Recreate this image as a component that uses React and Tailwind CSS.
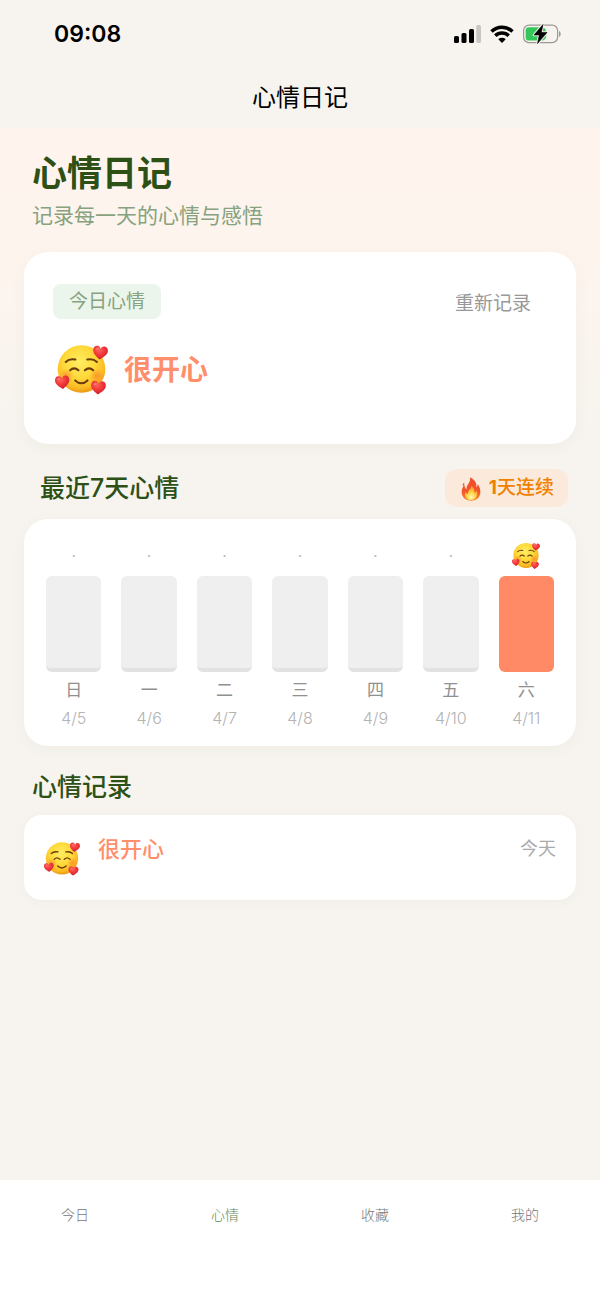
const HEART = 'M0 20 C-9 13 -22 5 -22 -7 C-22 -15 -17 -20 -11 -20 C-5 -20 -2 -17 0 -12 C2 -17 5 -20 11 -20 C17 -20 22 -15 22 -7 C22 5 9 13 0 20 Z';

const HEARTS = ['translate(151 52) rotate(6)', 'translate(38 140) rotate(-6) scale(0.97)', 'translate(145 156) rotate(4)'];

function LoveFace({ id, className }) {
  return (
    <svg viewBox="16 28 158 150" className={className} role="img" aria-label="很开心">
      <defs>
        <radialGradient id={`${id}-face`} cx="0.46" cy="0.36" r="0.66">
          <stop offset="0" stopColor="#ffee62" />
          <stop offset="0.5" stopColor="#ffd93a" />
          <stop offset="0.82" stopColor="#fbb922" />
          <stop offset="1" stopColor="#ea9010" />
        </radialGradient>
        <radialGradient id={`${id}-cheek`}>
          <stop offset="0" stopColor="#f8792b" stopOpacity="0.6" />
          <stop offset="1" stopColor="#f8792b" stopOpacity="0" />
        </radialGradient>
        <radialGradient id={`${id}-heart`} cx="0.4" cy="0.3" r="0.75">
          <stop offset="0" stopColor="#ff6259" />
          <stop offset="0.55" stopColor="#ee3438" />
          <stop offset="1" stopColor="#c8182a" />
        </radialGradient>
      </defs>
      <circle cx="95" cy="100" r="71" fill={`url(#${id}-face)`} />
      <circle cx="50" cy="120" r="22" fill={`url(#${id}-cheek)`} />
      <circle cx="140" cy="120" r="22" fill={`url(#${id}-cheek)`} />
      <g fill="none" stroke="#6b3d0c" strokeWidth="6" strokeLinecap="round">
        <path d="M48 79 Q59 68 77 72" />
        <path d="M112 72 Q130 68 141 79" />
        <path d="M61 104 Q73 92 86 104" />
        <path d="M105 104 Q118 92 130 104" />
        <path d="M76 134 Q95 151 113 134" />
      </g>
      {HEARTS.map((t) => (
        <g key={t} transform={t}>
          <path d={HEART} fill={`url(#${id}-heart)`} />
          <ellipse cx="-10" cy="-11" rx="5" ry="3" fill="#ff9a90" opacity="0.6" transform="rotate(-25 -10 -11)" />
        </g>
      ))}
    </svg>
  );
}

function Flame({ className }) {
  return (
    <svg viewBox="0 0 60 72" className={className} aria-hidden="true">
      <defs>
        <linearGradient id="flame-outer" x1="0" y1="0" x2="0" y2="1">
          <stop offset="0" stopColor="#ee4a2b" />
          <stop offset="0.6" stopColor="#f4552a" />
          <stop offset="1" stopColor="#f98a2c" />
        </linearGradient>
        <radialGradient id="flame-inner" cx="0.5" cy="0.8" r="0.75">
          <stop offset="0" stopColor="#fff9b8" />
          <stop offset="0.45" stopColor="#ffd447" />
          <stop offset="1" stopColor="#fb8a2c" />
        </radialGradient>
      </defs>
      <path d="M27 1 C42 9 48 19 46 31 C49 29 50 25 50 21 C56 29 59 38 58 47 C57 62 45 71 30 71 C13 71 2 60 2 45 C2 36 6 29 10 24 C11 31 13 35 17 37 C14 24 31 17 27 1 Z" fill="url(#flame-outer)" />
      <path d="M31 26 C42 34 40 41 41 48 C45 45 46 42 46 38 C54 53 45 69 30 69 C16 69 8 57 14 44 C16 49 18 50 21 51 C18 41 31 37 31 26 Z" fill="url(#flame-inner)" />
      <path d="M9 17 C5 20 4 24 6 27 C10 25 11 21 9 17 Z" fill="#f0552d" />
    </svg>
  );
}

function StatusIcons() {
  return (
    <div className="flex items-center gap-[9px]">
      <svg viewBox="0 0 27 18" className="h-[18px] w-[27px]" aria-label="信号">
        <rect x="0" y="11" width="5" height="7" rx="1.6" />
        <rect x="7.5" y="8" width="5" height="10" rx="1.6" />
        <rect x="15" y="4" width="5" height="14" rx="1.6" />
        <rect x="22.3" y="0" width="4.7" height="18" rx="1.6" fill="#c9c6c3" />
      </svg>
      <svg viewBox="0 0 24 18" className="h-[18px] w-6" aria-label="无线网络">
        <g fill="none" stroke="#000" strokeWidth="3.5">
          <path d="M1.5 6.6 A14.8 14.8 0 0 1 22.5 6.6" />
          <path d="M5.3 10.8 A9.4 9.4 0 0 1 18.7 10.8" />
        </g>
        <path d="M12 18 L8.3 14.3 A5.4 5.4 0 0 1 15.7 14.3 Z" />
      </svg>
      <svg viewBox="0 0 38 20" className="h-5 w-[38px]" aria-label="正在充电">
        <rect x="0.6" y="1.2" width="34" height="17.4" rx="5.4" fill="none" stroke="#9b9996" strokeWidth="1.2" />
        <path d="M36 7 C38.2 7.8 38.2 12 36 12.8 Z" fill="#9b9996" />
        <path d="M6 3.2 H20 Q23.5 5 23.5 10 Q23.5 15 20 16.6 H6 Q2.6 16.6 2.6 13.2 V6.6 Q2.6 3.2 6 3.2 Z" fill="#34c759" />
        <path d="M20 0.5 L11 11 H16.3 L14.5 19.5 L24 8.5 H18.3 Z" stroke="#f7f4ef" strokeWidth="2.6" strokeLinejoin="round" />
        <path d="M20 0.5 L11 11 H16.3 L14.5 19.5 L24 8.5 H18.3 Z" stroke="#000" strokeWidth="0.6" strokeLinejoin="round" />
      </svg>
    </div>
  );
}

const DAYS = [
  { name: '日', date: '4/5' },
  { name: '一', date: '4/6' },
  { name: '二', date: '4/7' },
  { name: '三', date: '4/8' },
  { name: '四', date: '4/9' },
  { name: '五', date: '4/10' },
  { name: '六', date: '4/11', happy: true },
];

const TABS = ['今日', '心情', '收藏', '我的'];

function Day({ name, date, happy }) {
  return (
    <li className="flex min-w-0 flex-1 flex-col items-center px-[10px]">
      <span className="flex h-9 items-center text-base text-[#bbbbbb]">
        {happy ? <LoveFace id="day" className="h-7 w-7" /> : '·'}
      </span>
      <span
        className={
          happy
            ? 'mt-[2px] h-24 w-full rounded-md bg-[#ff8a65]'
            : 'mt-[2px] h-24 w-full rounded-md border-b-4 border-[#e2e2e2] bg-[#efefef]'
        }
      />
      <span className="mt-1 text-[17px] leading-7 text-[#909090]">{name}</span>
      <span className="text-base leading-7 font-light text-[#b3b3b3]">{date}</span>
    </li>
  );
}

export default function App() {
  return (
    <div className="flex min-h-screen flex-col bg-[#f7f4ef] font-['Inter','Noto_Sans_CJK_SC',sans-serif] text-black">
      <header>
        <div className="flex h-[68px] items-center justify-between pl-[54px] pr-[39px]">
          <time className="text-[23px] font-semibold">09:08</time>
          <StatusIcons />
        </div>
        <p className="flex h-[60px] items-center justify-center text-2xl">心情日记</p>
      </header>

      <main className="flex-1 bg-[linear-gradient(#fff4ed,#fcf4ee_180px,#f7f4ef_300px)] px-6 pt-5 pb-8">
        <div className="px-2">
          <h1 className="text-[35px] leading-[50px] font-bold text-[#2d5016]">心情日记</h1>
          <p className="text-[21px] leading-9 text-[#86a27f]">记录每一天的心情与感悟</p>
        </div>

        <section className="mt-[18px] h-48 rounded-3xl bg-white px-[29px] pt-8 shadow-[0_4px_16px_rgba(45,80,22,0.04)]">
          <div className="flex items-start justify-between">
            <h2 className="rounded-lg bg-[#ebf5eb] px-4 pt-px text-[19px] leading-[34px] text-[#86a27f]">今日心情</h2>
            <button type="button" className="px-4 pt-1 text-[19px] leading-8 text-[#999999]">重新记录</button>
          </div>
          <div className="mt-6 flex items-center gap-4 pl-[2px]">
            <LoveFace id="today" className="h-[52px] w-[53px]" />
            <p className="text-[28px] leading-10 font-bold text-[#ff8f6c]">很开心</p>
          </div>
        </section>

        <div className="mt-[25px] flex items-center justify-between px-2">
          <h2 className="pl-2 text-[25px] leading-[38px] font-medium text-[#2d5016]">最近7天心情</h2>
          <p className="flex h-[38px] items-center gap-[6px] rounded-xl bg-[#fbeadb] px-[14px] pt-px text-[19px] font-medium text-[#f08000]">
            <Flame className="h-6 w-6" />
            <span>
              <b className="font-bold">1</b>天连续
            </span>
          </p>
        </div>

        <section className="mt-3 rounded-3xl bg-white px-3 pt-[19px] pb-[14px] shadow-[0_4px_16px_rgba(45,80,22,0.04)]">
          <ul className="flex">
            {DAYS.map((day) => (
              <Day key={day.date} {...day} />
            ))}
          </ul>
        </section>

        <h2 className="mt-[22px] px-2 text-[25px] leading-[38px] font-medium text-[#2d5016]">心情记录</h2>

        <article className="mt-[9px] flex h-[85px] rounded-[18px] bg-white px-5 pt-[18px] shadow-[0_2px_12px_rgba(45,80,22,0.04)]">
          <LoveFace id="entry" className="mt-2 h-9 w-9" />
          <h3 className="ml-[18px] flex-1 text-[22px] leading-8 font-medium text-[#ff8f6c]">很开心</h3>
          <time className="text-lg leading-8 text-[#aaaaaa]">今天</time>
        </article>
      </main>

      <nav className="flex h-[118px] bg-white">
        {TABS.map((tab) => (
          <a
            key={tab}
            href="#"
            className={
              tab === '心情'
                ? 'flex h-[70px] flex-1 items-center justify-center text-sm font-light text-[#5f8557]'
                : 'flex h-[70px] flex-1 items-center justify-center text-sm font-light text-[#777777]'
            }
          >
            {tab}
          </a>
        ))}
      </nav>
    </div>
  );
}
